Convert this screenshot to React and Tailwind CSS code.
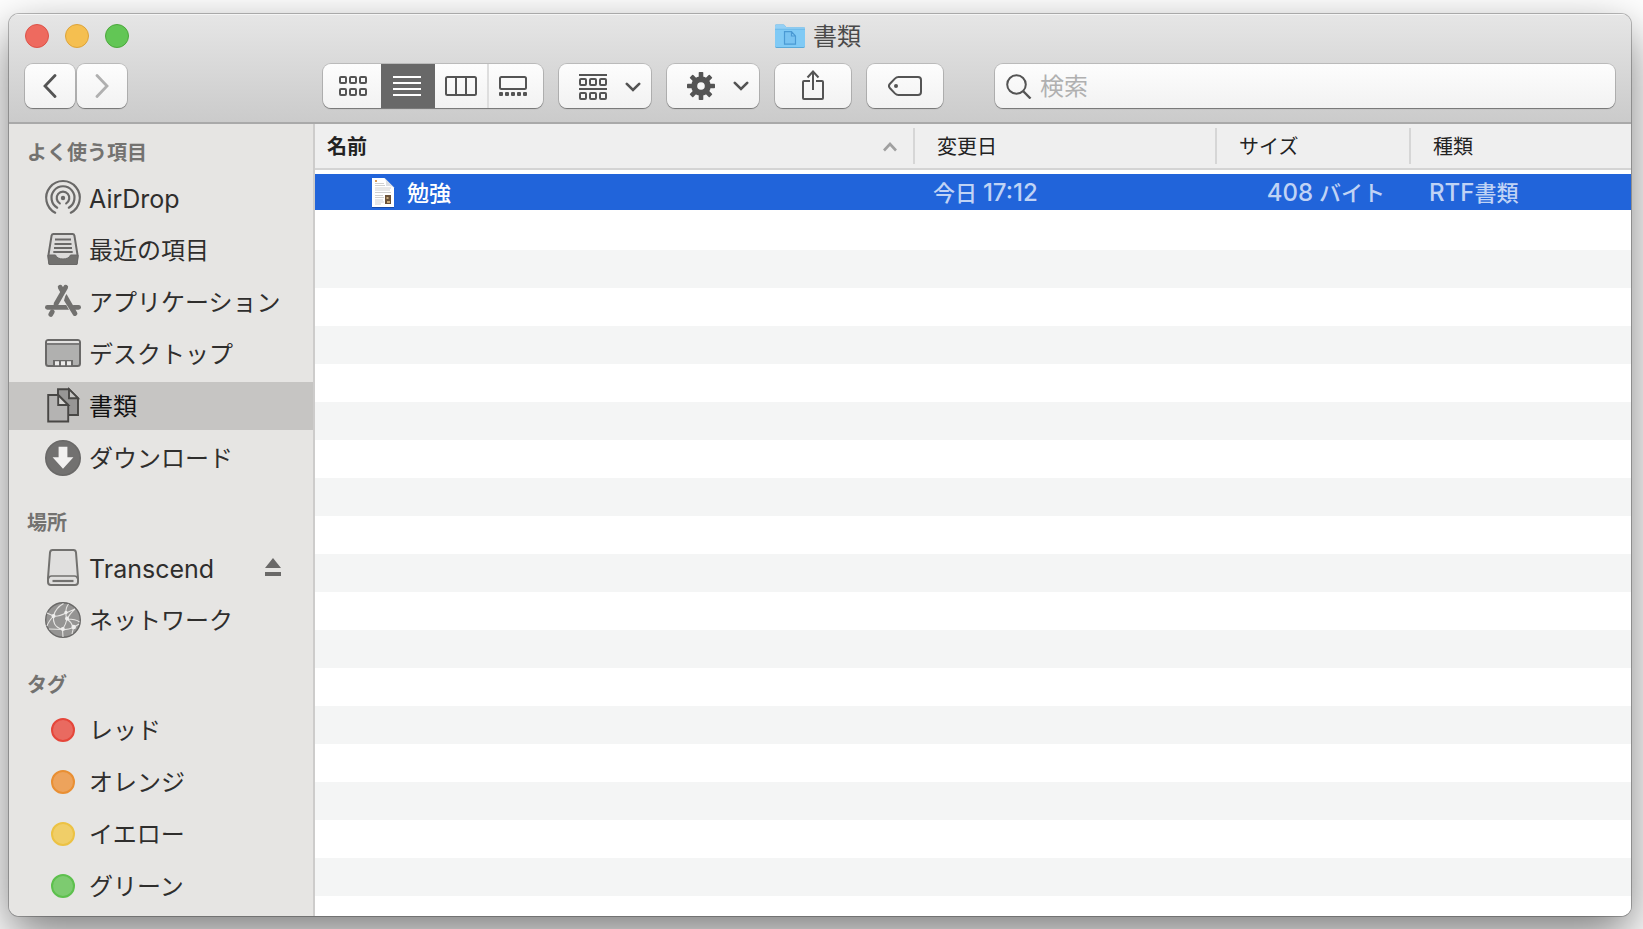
import React from "react";

const INK = "#545454";
const SIDE = "#6a6968";

/* ---------- toolbar drawings ---------- */

function Squares({ y }) {
  return [0, 10, 20].map((x) => (
    <rect key={x} x={x + 1} y={y + 1} width="6" height="6" rx="1" fill="none" stroke={INK} strokeWidth="2" />
  ));
}

const IconGrid = () => (
  <svg width="28" height="20" viewBox="0 0 28 20" aria-hidden="true">
    <Squares y={0} />
    <Squares y={12} />
  </svg>
);

const IconLines = () => (
  <svg width="28" height="20" viewBox="0 0 28 20" aria-hidden="true">
    <path d="M0 1h28M0 7h28M0 13h28M0 19h28" stroke="#fff" strokeWidth="2" />
  </svg>
);

const IconColumns = () => (
  <svg width="32" height="20" viewBox="0 0 32 20" aria-hidden="true" fill="none" stroke={INK} strokeWidth="2">
    <rect x="1" y="1" width="30" height="18" rx="1.5" />
    <path d="M11 1v18M21 1v18" />
  </svg>
);

const IconGallery = () => (
  <svg width="28" height="20" viewBox="0 0 28 20" aria-hidden="true">
    <rect x="1" y="1" width="26" height="12" rx="1.5" fill="none" stroke={INK} strokeWidth="2" />
    {[0, 6, 12, 18, 24].map((x) => (
      <rect key={x} x={x} y="16" width="4" height="4" rx="1" fill={INK} />
    ))}
  </svg>
);

const IconGrouped = () => (
  <svg width="28" height="26" viewBox="0 0 28 26" aria-hidden="true">
    <path d="M0 1h28M0 15h28" stroke={INK} strokeWidth="2" />
    <Squares y={4} />
    <Squares y={18} />
  </svg>
);

const Chevron = () => (
  <svg width="16" height="10" viewBox="0 0 16 10" aria-hidden="true">
    <path d="M1.8 1.8 8 8l6.200-6.200" fill="none" stroke={INK} strokeWidth="2.600" strokeLinecap="round" />
  </svg>
);

const IconGear = () => (
  <svg width="28" height="28" viewBox="0 0 28 28" aria-hidden="true">
    {[0, 45, 90, 135].map((a) => (
      <rect key={a} x="11.700" y="0" width="4.600" height="28" rx="0.800" fill={INK} transform={`rotate(${a} 14 14)`} />
    ))}
    <circle cx="14" cy="14" r="9.800" fill={INK} />
    <circle cx="14" cy="14" r="3.800" fill="#f7f7f7" />
  </svg>
);

const IconShare = () => (
  <svg width="22" height="30" viewBox="0 0 22 30" aria-hidden="true" fill="none" stroke={INK} strokeWidth="2">
    <path d="M8 11H2a1 1 0 0 0-1 1v16a1 1 0 0 0 1 1h18a1 1 0 0 0 1-1V12a1 1 0 0 0-1-1h-6" />
    <path d="M11 20V2M5.500 7.500 11 1.500l5.500 6" />
  </svg>
);

const IconTag = () => (
  <svg width="34" height="20" viewBox="0 0 34 20" aria-hidden="true">
    <path
      d="M10.500 1H30a3 3 0 0 1 3 3v12a3 3 0 0 1-3 3H10.500c-1.500 0-2.600-.6-3.600-1.600L2 12.200c-1.300-1.400-1.300-3 0-4.400l4.900-5.200C7.900 1.600 9 1 10.500 1Z"
      fill="none"
      stroke={INK}
      strokeWidth="2"
    />
    <circle cx="8" cy="10" r="2" fill={INK} />
  </svg>
);

const IconSearch = () => (
  <svg className="shrink-0" width="26" height="26" viewBox="0 0 26 26" aria-hidden="true" fill="none" stroke={INK} strokeWidth="2">
    <circle cx="10.500" cy="11.500" r="9.300" />
    <path d="m17 18 7.500 7.500" strokeWidth="2.400" />
  </svg>
);

const IconFolder = () => (
  <svg width="30" height="24" viewBox="0 0 30 25" preserveAspectRatio="none" aria-hidden="true">
    <path d="M0 2a1.500 1.500 0 0 1 1.500-1.500h7C10 .5 10.500 3.500 12 3.500h16.500A1.500 1.500 0 0 1 30 5v18.500a1.500 1.500 0 0 1-1.500 1.500h-27A1.500 1.500 0 0 1 0 23.500Z" fill="#5aa9d8" />
    <path d="M0 2A1.500 1.500 0 0 1 1.500.5h7C10 .5 10.500 3.500 12 3.500h16.500A1.500 1.500 0 0 1 30 5v18H0Z" fill="#94d0f5" />
    <path d="M0 5.500h30V23a1 1 0 0 1-1 1H1a1 1 0 0 1-1-1Z" fill="#80caf5" />
    <path d="M0 5.500h30" stroke="#6bb8e6" strokeWidth="1" />
    <path d="M9.500 8h7l4 4.500V21h-11Z M16.500 8v4.500h4" fill="#79c3f1" stroke="#4a9ad4" strokeWidth="1.200" />
  </svg>
);

/* ---------- sidebar drawings, all on a 36px square ---------- */

const Side = ({ children }) => (
  <svg className="shrink-0 overflow-visible" width="36" height="36" viewBox="0 0 36 36" aria-hidden="true">
    {children}
  </svg>
);

const AirDropIcon = () => (
  <Side>
    <g fill="none" stroke={SIDE} strokeWidth="2.200" strokeLinecap="round">
      <path d="M10.200 32.700A16.800 16.800 0 1 1 25.800 32.700" />
      <path d="M12.200 27.700A11.500 11.500 0 1 1 23.800 27.700" />
      <path d="M14.800 23.400A6.300 6.300 0 1 1 21.200 23.400" />
    </g>
    <circle cx="18" cy="18" r="2.200" fill={SIDE} />
  </Side>
);

const RecentsIcon = () => (
  <Side>
    <path d="M6.600 3.500Q7 2 8.500 2h19Q29 2 29.400 3.500L32.700 24 31.800 31Q31.600 32 30.500 32h-25Q4.400 32 4.200 31L3.300 24Z" fill="#dcdbda" stroke={SIDE} strokeWidth="2" />
    <path d="M3 23h7.500c1 2.600 3.800 4 7.500 4s6.500-1.400 7.500-4H33l-1 9.500H4Z" fill="#72716f" stroke={SIDE} strokeWidth="1" />
    <path d="M10 7.500h16M9.500 12h17M9 16h18M8.300 20h19.400" stroke={SIDE} strokeWidth="2" />
  </Side>
);

const AppsIcon = () => (
  <Side>
    <g stroke="#72716f" strokeWidth="4.800" fill="none" strokeLinecap="round">
      <path d="M15.200 3.200 18.400 8.800" />
      <path d="M2.400 23.300H24" />
      <path d="M7.300 27.800 5.700 30.500" />
    </g>
    <path d="M18.500 8.500 30.600 30" stroke="#e6e5e3" strokeWidth="7.600" />
    <g stroke="#72716f" strokeWidth="4.800" fill="none" strokeLinecap="round">
      <path d="M20.700 3.200 11 20" />
      <path d="M28.800 23.300h4.800" />
    </g>
    <path d="M19.500 10.700 24.200 19 21.400 20.600 18 14.500Z" fill="#e6e5e3" />
    <path d="M20.200 12.300 21.500 10 32 28.200a2.400 2.400 0 0 1-4 2.700L19 16.500Z" fill="#72716f" />
  </Side>
);

const DesktopIcon = () => (
  <Side>
    <rect x="1" y="4" width="34" height="26" rx="2.500" fill="#b0b0af" stroke={SIDE} strokeWidth="2" />
    <path d="M2 7V5.500Q2 5 3 5h30q1 0 1 .5V7Z" fill="#e3e2e1" />
    <path d="M1 8h34" stroke={SIDE} strokeWidth="1.600" />
    <path d="M8 30v-6h20v6Z" fill={SIDE} />
    <path d="M10 25.300h4v4h-4ZM16 25.300h4v4h-4ZM22 25.300h4v4h-4Z" fill="#ecebea" />
  </Side>
);

const DocumentsIcon = () => (
  <Side>
    <g stroke="#484745" strokeWidth="1.900">
      <path d="M13 1.200h11l9 9V27H13Z" fill="#979695" />
      <path d="M24 1.200v9h9Z" fill="#c6c5c3" />
      <path d="M3.200 7h10l10 10v16.500h-20Z" fill="#b4b3b2" />
      <path d="M13.200 7v10h10Z" fill="#d8d7d5" />
    </g>
  </Side>
);

const DownloadsIcon = () => (
  <Side>
    <circle cx="18" cy="18" r="17.200" fill="#727170" stroke={SIDE} strokeWidth="1.600" />
    <path d="M13.600 6.800h8.800v10.400h6L18 28.700 7.600 17.200h6Z" fill="#f2f1f0" />
  </Side>
);

const DriveIcon = () => (
  <Side>
    <path d="M5 2.500Q5.300 0 7.500 0h21Q30.700 0 31 2.500L33 28v4q0 3-3 3H6q-3 0-3-3v-4Z" fill="#e0dfde" stroke="#72716f" strokeWidth="2" />
    <path d="M3.500 28.500Q4 26 6.500 26h23q2.500 0 3 2.500" fill="none" stroke="#72716f" strokeWidth="1.700" />
    <path d="M7.500 31h21" stroke="#72716f" strokeWidth="2.200" />
  </Side>
);

const NetworkIcon = () => (
  <Side>
    <circle cx="18" cy="18" r="17.300" fill="#959493" stroke={SIDE} strokeWidth="1.400" />
    <g fill="none" stroke="#e6e5e3" strokeWidth="1.100">
      <path d="M8.500 14C8 20 9 25 17.500 27.500M8.500 14C10 8 14 4 18.500 1.500M8.500 14 2 11M8.500 14C13 15 18 12.500 21 11M21 11C20.500 7 22 4 23.500 2M21 11l9-4M21 11c-.5 3 0 4 1 6M22 17C26 10 28 9 30 7M22 17c3 2 5 5 6 8M22 17c-1 5-3 8-4.500 10.500M17.500 27.500 18 35M17.500 27.500C22 28 25 27 28.500 25.500M28.500 25.500 34 22M28.500 25.500 27 32M17.500 27.500C12 27 8 27 4 27M22 17c6 0 10 1 12.500 3M8.500 14C4 19 3 21 2 24" />
    </g>
    <g fill="#efeeed">
      <circle cx="8.500" cy="14" r="2" />
      <circle cx="21" cy="10.500" r="1.700" />
      <circle cx="22" cy="16.500" r="2" />
      <circle cx="17.800" cy="27" r="2" />
      <circle cx="28.700" cy="25" r="2.300" />
    </g>
  </Side>
);

const EjectIcon = () => (
  <svg width="16" height="18" viewBox="0 0 16 18" aria-hidden="true" fill={SIDE}>
    <path d="M8 0 16 10H0ZM0 14h16v4H0Z" />
  </svg>
);

const FileIcon = () => (
  <svg className="shrink-0" width="24" height="32" viewBox="0 0 24 32" aria-hidden="true">
    <path d="M1 1.500h12l10 10V31H1Z" fill="#0b2f78" opacity=".5" />
    <path d="M1 1h12.500L23 10.500V30H1Z" fill="#fff" />
    <path d="M13.500 1 23 10.500c-3-2-6-1.500-8-1.500 0-3 .5-6-1.500-8Z" fill="#dcdfe4" />
    <path d="M4 6.500h9M4 8.500h10M4 11h16M4 13h15M4 15.500h16M4 18.500h8M4 20.500h9M4 23h8M4 25h9M4 27h6" stroke="#c4c4c4" strokeWidth=".8" />
    <rect x="4" y="3" width="2" height="2" fill="#d99a55" />
    <rect x="14" y="18" width="6" height="9" fill="#6b5238" />
    <path d="M15.500 20h2v2h-2ZM16 24h3v2h-3Z" fill="#c9ab7c" />
  </svg>
);

/* ---------- building blocks ---------- */

const raised =
  "bg-linear-to-b from-[#fdfdfd] to-[#f2f2f2] shadow-[0_0_0_1px_#00000024,0_1px_1px_#00000059]";

function ToolButton({ label, className, disabled, children }) {
  return (
    <button
      type="button"
      aria-label={label}
      disabled={disabled}
      className={`flex h-11 shrink-0 items-center justify-center rounded-lg ${raised} ${className}`}
    >
      {children}
    </button>
  );
}

function Arrow({ d, color }) {
  return (
    <svg width="14" height="24" viewBox="0 0 14 24" aria-hidden="true">
      <path d={d} fill="none" stroke={color} strokeWidth="2.800" strokeLinecap="round" />
    </svg>
  );
}

function TagDot({ className }) {
  return (
    <span className="flex w-9 shrink-0 justify-center">
      <span className={`size-6 rounded-full border-2 ${className}`} />
    </span>
  );
}

const sections = [
  {
    title: "よく使う項目",
    items: [
      { name: "AirDrop", icon: <AirDropIcon />, latin: true },
      { name: "最近の項目", icon: <RecentsIcon /> },
      { name: "アプリケーション", icon: <AppsIcon /> },
      { name: "デスクトップ", icon: <DesktopIcon /> },
      { name: "書類", icon: <DocumentsIcon />, current: true },
      { name: "ダウンロード", icon: <DownloadsIcon /> },
    ],
  },
  {
    title: "場所",
    items: [
      { name: "Transcend", icon: <DriveIcon />, latin: true, eject: true },
      { name: "ネットワーク", icon: <NetworkIcon /> },
    ],
  },
  {
    title: "タグ",
    items: [
      { name: "レッド", icon: <TagDot className="border-[#e5463a] bg-[#e96a60]" /> },
      { name: "オレンジ", icon: <TagDot className="border-[#e98f33] bg-[#eda35c]" /> },
      { name: "イエロー", icon: <TagDot className="border-[#ecc244] bg-[#f0ce68]" /> },
      { name: "グリーン", icon: <TagDot className="border-[#5dc04d] bg-[#7dcb70]" /> },
    ],
  },
];

function Sidebar() {
  return (
    <nav className="w-[306px] shrink-0 border-r-2 border-[#cdcccb] bg-[#e6e5e3] pb-1">
      {sections.map((s, i) => (
        <section key={s.title} className={i === 0 ? "pt-[17px]" : "pt-[29px]"}>
          <h2 className="mb-[9px] pl-[18px] text-xl leading-6 font-bold text-[#737270]">{s.title}</h2>
          <ul className="flex flex-col gap-1">
            {s.items.map((it) => (
              <li key={it.name} className={`flex h-12 items-center pr-8 pl-9 ${it.current ? "bg-[#c6c5c3]" : ""}`}>
                <a
                  href="#"
                  className={`flex flex-1 items-center gap-2 leading-8 whitespace-nowrap ${
                    it.latin ? "text-[25px]" : "text-2xl"
                  } ${it.current ? "text-[#111111]" : "text-[#2f2e2d]"}`}
                >
                  {it.icon}
                  <span className="pt-0.5">{it.name}</span>
                </a>
                {it.eject && (
                  <button type="button" aria-label={`${it.name}を取り出す`} className="pb-0.5">
                    <EjectIcon />
                  </button>
                )}
              </li>
            ))}
          </ul>
        </section>
      ))}
    </nav>
  );
}

const views = [
  { label: "アイコン", icon: <IconGrid />, cls: "w-[58px] rounded-l-lg pl-0.5" },
  { label: "リスト", icon: <IconLines />, cls: "w-[54px] bg-[#686868] pr-0.5", on: true },
  { label: "カラム", icon: <IconColumns />, cls: "w-[54px] border-r-2 border-[#dedede]" },
  { label: "ギャラリー", icon: <IconGallery />, cls: "w-[54px] pr-1.5 rounded-r-lg" },
];

function Toolbar() {
  return (
    <div className="flex items-center gap-4">
      <div className="flex w-[282px] shrink-0 gap-[2px]">
        <ToolButton label="戻る" className="w-[50px]">
          <Arrow d="M12 1.500 2 12l10 10.500" color={INK} />
        </ToolButton>
        <ToolButton label="進む" className="w-[50px]" disabled>
          <Arrow d="M2 1.500 12 12 2 22.500" color="#b0b0b0" />
        </ToolButton>
      </div>
      <div role="group" aria-label="表示" className={`flex h-11 shrink-0 rounded-lg ${raised}`}>
        {views.map((v) => (
          <button
            key={v.label}
            type="button"
            aria-label={v.label}
            aria-pressed={!!v.on}
            className={`flex h-11 items-center justify-center ${v.cls}`}
          >
            {v.icon}
          </button>
        ))}
      </div>
      <ToolButton label="グループ" className="w-[92px] gap-[18px] pt-0.5 pl-2.5">
        <IconGrouped />
        <Chevron />
      </ToolButton>
      <ToolButton label="アクション" className="w-[92px] gap-[18px] pl-2.5">
        <IconGear />
        <Chevron />
      </ToolButton>
      <ToolButton label="共有" className="w-[76px] pb-0.5">
        <IconShare />
      </ToolButton>
      <ToolButton label="タグを編集" className="w-[76px]">
        <IconTag />
      </ToolButton>
      <label className={`ml-9 flex h-11 min-w-0 flex-1 items-center gap-2 rounded-lg px-[11px] ${raised}`}>
        <IconSearch />
        <input
          type="search"
          aria-label="検索"
          placeholder="検索"
          className="min-w-0 flex-1 bg-transparent pt-0.5 text-2xl leading-8 text-[#333333] outline-none placeholder:text-[#b0b0b0]"
        />
      </label>
    </div>
  );
}

const th = "h-[46px] border-b-2 border-[#d4d4d4] bg-[#efefef] p-0 text-left text-xl font-normal text-[#222222]";
const thInner = "flex h-9 items-center border-l-2 border-[#d6d6d6] pt-0.5 pl-[22px]";
const td = "h-[42px] border-t-4 border-b-2 border-white bg-[#2164da] pt-0.5 text-[22px] leading-8 font-medium text-[#c0d3f5]";

function FileList() {
  return (
    <main className="min-w-0 flex-1 bg-white bg-[linear-gradient(#f4f5f5_50%,#ffffff_50%)] bg-[length:100%_76px] bg-[position:0_50px]">
      <table className="w-full table-fixed border-separate border-spacing-0 whitespace-nowrap">
        <colgroup>
          <col />
          <col className="w-[302px]" />
          <col className="w-[194px]" />
          <col className="w-[222px]" />
        </colgroup>
        <thead>
          <tr>
            <th className={th} aria-sort="ascending">
              <button type="button" className="flex h-9 w-full items-center justify-between pt-0.5 pr-[15px] pl-3 font-bold">
                名前
                <svg width="16" height="10" viewBox="0 0 16 10" aria-hidden="true">
                  <path d="M2 8.500 8 2l6 6.500" fill="none" stroke="#a0a0a0" strokeWidth="2.600" />
                </svg>
              </button>
            </th>
            <th className={th}>
              <div className={thInner}>変更日</div>
            </th>
            <th className={th}>
              <div className={thInner}>サイズ</div>
            </th>
            <th className={th}>
              <div className={thInner}>種類</div>
            </th>
          </tr>
        </thead>
        <tbody>
          <tr aria-selected="true">
            <td className={td}>
              <div className="flex items-center gap-3 pl-14 text-white">
                <FileIcon />
                勉強
              </div>
            </td>
            <td className={`${td} pl-5`}>
              今日 <span className="text-2xl leading-8">17:12</span>
            </td>
            <td className={`${td} pr-6 text-right`}>
              <span className="text-2xl leading-8">408</span> バイト
            </td>
            <td className={`${td} pl-5`}>
              <span className="text-2xl leading-8">RTF</span>書類
            </td>
          </tr>
        </tbody>
      </table>
    </main>
  );
}

export default function App() {
  return (
    <div className="flex min-h-screen bg-white pt-[14px] pr-3 pb-[13px] pl-[9px] font-['Inter','Noto_Sans_CJK_JP',sans-serif]">
      <div className="flex min-w-0 flex-1 flex-col overflow-hidden rounded-[10px] shadow-[0_0_0_1px_#00000040,0_18px_48px_#00000085]">
        <header className="border-b-2 border-[#a9a9a9] bg-linear-to-b from-[#e6e6e6] to-[#cbcbcb] px-4 pt-[10px] pb-[14px] shadow-[inset_0_1px_0_#f5f5f5]">
          <div className="mb-4 grid h-6 grid-cols-[1fr_auto_1fr] items-center">
            <div className="flex gap-4">
              <button type="button" aria-label="閉じる" className="size-6 rounded-full border border-[#dc5248] bg-[#ee6a5f]" />
              <button type="button" aria-label="しまう" className="size-6 rounded-full border border-[#dca33a] bg-[#f5bf50]" />
              <button type="button" aria-label="拡大" className="size-6 rounded-full border border-[#4ca73c] bg-[#62c655]" />
            </div>
            <h1 className="flex h-6 items-center gap-2 pr-1 text-2xl leading-6 text-[#4a4a4a]">
              <IconFolder />
              <span className="pt-0.5">書類</span>
            </h1>
          </div>
          <Toolbar />
        </header>
        <div className="flex flex-1">
          <Sidebar />
          <FileList />
        </div>
      </div>
    </div>
  );
}
